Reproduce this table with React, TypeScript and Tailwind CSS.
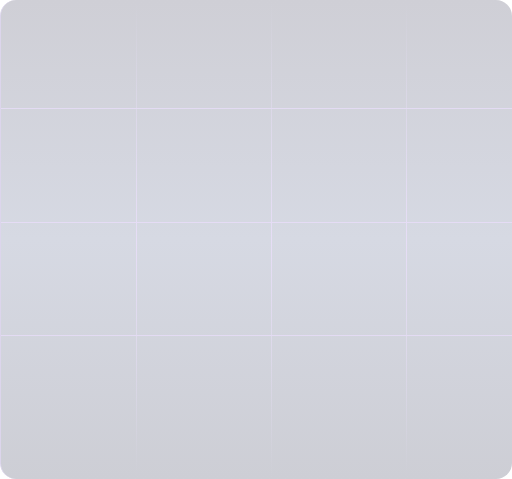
export default function App() {
  return (
    <div className="h-[479px] w-[512px] bg-white">
      <div className="grid h-full w-full grid-cols-[135px_1px_134px_1px_134px_1px_1fr] grid-rows-[108px_1px_113px_1px_112px_1px_1fr] overflow-hidden rounded-2xl border-l border-[#dcd5ec] bg-gradient-to-b from-[#cfcfd6] via-[#d6d9e3] to-[#cdced5]">
        {/* vertical guides, fading at the ends */}
        <div className="col-start-2 row-span-7 row-start-1 bg-gradient-to-b from-transparent via-[#e6ddf6] to-transparent" />
        <div className="col-start-4 row-span-7 row-start-1 bg-gradient-to-b from-transparent via-[#e6ddf6] to-transparent" />
        <div className="col-start-6 row-span-7 row-start-1 bg-gradient-to-b from-transparent via-[#e6ddf6] to-transparent" />
        {/* horizontal guides */}
        <div className="col-span-7 col-start-1 row-start-2 bg-[#e3dbf3]" />
        <div className="col-span-7 col-start-1 row-start-4 bg-[#e5dcf5]" />
        <div className="col-span-7 col-start-1 row-start-6 bg-[#e3dbf3]" />
      </div>
    </div>
  );
}
